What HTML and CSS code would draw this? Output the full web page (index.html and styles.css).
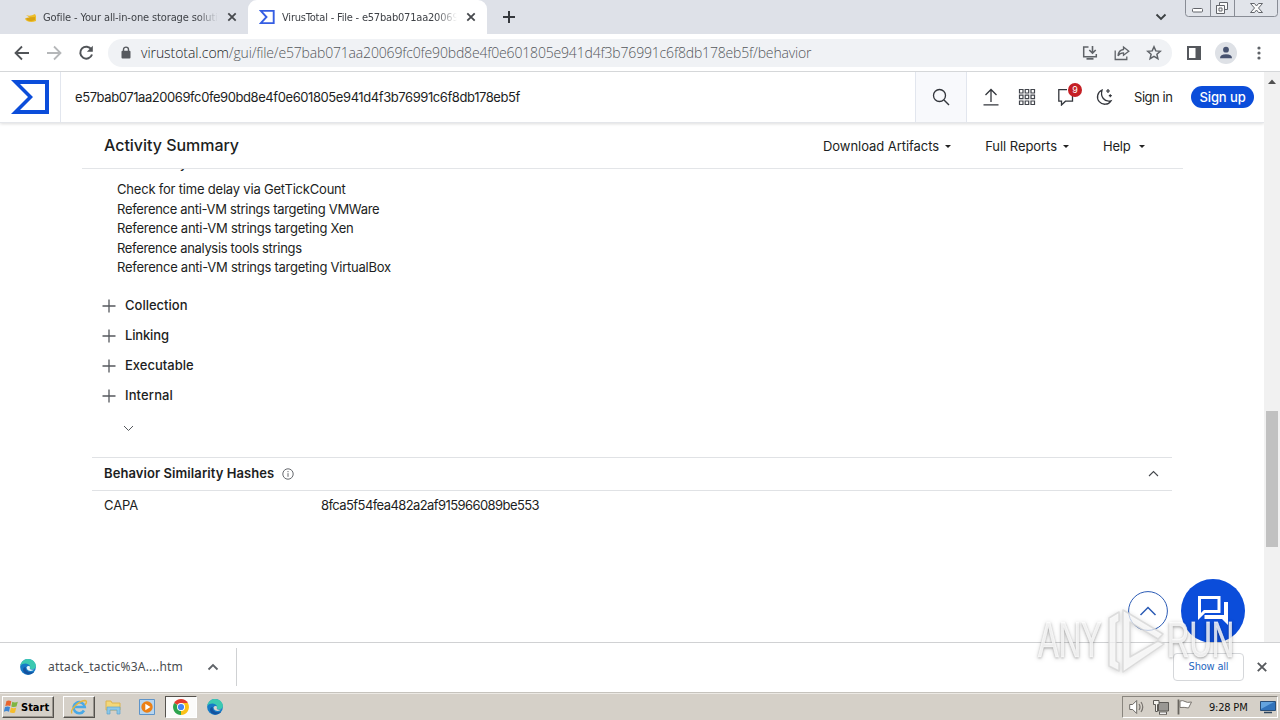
FILE: index.html
```
<!DOCTYPE html>
<html lang="en">
<head>
<meta charset="utf-8">
<title>VirusTotal - File</title>
<link rel="stylesheet" href="styles.css">
</head>
<body>
<div class="screen">
  <div class="tabs">
    <div class="tab tab-idle">
      <svg class="fav" width="16" height="16" viewBox="0 0 16 16"><path d="M4 6q4 2 9-1l1 2v5q-5 2-9 0-2-1-2-3 3 1 5 0z" fill="#edbd29"/><path d="M4 9q4-1 9-1v3q-5 2-8 0z" fill="#d9a312"/></svg>
      <span class="tab-title t1">Gofile - Your all-in-one storage soluti</span>
      <svg width="10" height="10" viewBox="0 0 10 10"><path d="M1.3 1.3l7.4 7.4M8.7 1.3L1.3 8.7" stroke="#46494d" stroke-width="1.8"/></svg>
    </div>
    <div class="tab tab-active">
      <svg class="fav" width="16" height="16" viewBox="0 0 16 16"><path d="M1.8 1.9h12.9v12.2H1.8L7.5 8z" fill="none" stroke="#355ee3" stroke-width="1.9"/></svg>
      <span class="tab-title t2">VirusTotal - File - e57bab071aa20069</span>
      <svg width="10" height="10" viewBox="0 0 10 10"><path d="M1.3 1.3l7.4 7.4M8.7 1.3L1.3 8.7" stroke="#46494d" stroke-width="1.8"/></svg>
    </div>
    <svg class="newtab" width="14" height="14" viewBox="0 0 14 14"><path d="M7 1v12M1 7h12" stroke="#35383d" stroke-width="2"/></svg>
    <svg class="tabsearch" width="12" height="8" viewBox="0 0 12 8"><path d="M1.500 1.500L6 6l4.500-4.500" fill="none" stroke="#3c4043" stroke-width="1.900"/></svg>
    <svg class="winctl" width="97" height="18" viewBox="0 0 97 18"><path d="M1.500-1v14.500q0 3 3 3h86q3 0 3-3V-1M26.500 0v16.500M50.500 0v16.500" fill="#e1e4ea" stroke="#888c95"/><rect x="8.500" y="8.500" width="10" height="3.500" rx="1" fill="#fff" stroke="#62656b"/><path d="M35.500 2.500h8v7h-3v3h-8V5.500h3z" fill="#fafafa" stroke="#62656b"/><path d="M32.500 5.500h8V13.500h-8zM35 8h3v3h-3z" fill="#fafafa" stroke="#62656b"/><path d="M66.500 3.500h4l2 2.500 2-2.500h4L74.500 8l4 4.500h-4l-2-2.500-2 2.500h-4l4-4.500z" fill="#fafafa" stroke="#62656b"/></svg>
  </div>
  <div class="toolbar">
    <svg class="nav" width="16" height="16" viewBox="0 0 16 16"><path d="M15 8H2M8 1.500L1.500 8 8 14.500" fill="none" stroke="#515458" stroke-width="1.800"/></svg>
    <svg class="nav" width="16" height="16" viewBox="0 0 16 16"><path d="M1 8h13M8 1.500L14.500 8 8 14.500" fill="none" stroke="#b5b7b9" stroke-width="1.800"/></svg>
    <svg class="nav" width="16" height="16" viewBox="0 0 16 16"><path d="M13.400 4.500A6 6 0 1 0 14 9.500" fill="none" stroke="#515458" stroke-width="2"/><path d="M14.800.8v6H8.900z" fill="#515458"/></svg>
    <div class="omnibox">
      <svg class="lock" width="10" height="13" viewBox="0 0 10 13"><path d="M2.500 5V3.600a2.500 2.500 0 0 1 5 0V5" fill="none" stroke="#56595e" stroke-width="1.400"/><rect x=".5" y="4.700" width="9" height="7.800" rx="1" fill="#56595e"/></svg>
      <span class="url"><span class="host">virustotal.com</span><span class="path">/gui/file/e57bab071aa20069fc0fe90bd8e4f0e601805e941d4f3b76991c6f8db178eb5f/behavior</span></span>
      <span class="omni-icons">
        <svg width="16" height="16" viewBox="0 0 16 16"><path d="M6.500 2H1.700v9.800h12.600V9" fill="none" stroke="#5f6368" stroke-width="1.500"/><path d="M4.500 13.800h7" stroke="#5f6368" stroke-width="1.800"/><path d="M10.500 1v7M7.300 5l3.200 3.200L13.700 5" fill="none" stroke="#5f6368" stroke-width="1.600"/></svg>
        <svg width="16" height="16" viewBox="0 0 16 16"><path d="M1.200 5.500v9h11.600v-3M9.500 2l5.300 4.200-5.300 4V7.800Q5.800 7.800 4 10.800 4.500 5 9.500 4.500z" fill="none" stroke="#5f6368" stroke-width="1.300"/></svg>
        <svg width="16" height="16" viewBox="0 0 16 16"><path d="M8 1.800l1.800 4.100 4.500.4-3.400 3 1 4.400L8 11.400l-3.900 2.300 1-4.400-3.400-3 4.500-.4z" fill="none" stroke="#5f6368" stroke-width="1.500"/></svg>
      </span>
    </div>
    <svg class="side" width="14" height="14" viewBox="0 0 14 14"><path d="M1 1h12v12H1z" fill="none" stroke="#55585d" stroke-width="2"/><path d="M8.500 1h5v12h-5z" fill="#55585d"/></svg>
    <svg class="profile" width="22" height="22" viewBox="0 0 22 22"><circle cx="11" cy="11" r="11" fill="#dee1e6"/><circle cx="11" cy="7.700" r="2.900" fill="#47526f"/><path d="M5 16.200q0-4 6-4t6 4z" fill="#47526f"/></svg>
    <svg class="dots" width="4" height="14" viewBox="0 0 4 14"><g fill="#5f6368"><circle cx="2" cy="2" r="1.600"/><circle cx="2" cy="7" r="1.600"/><circle cx="2" cy="12" r="1.600"/></g></svg>
  </div>
  <div class="page">
    <div class="main">
      <header class="vt-head">
        <div class="vt-logo"><svg width="39" height="34" viewBox="0 0 39 34"><path d="M0 0h38v34H0l17-17zM9 4l13 13L9 30h25V4z" fill="#0b4dda" fill-rule="evenodd"/></svg></div>
        <span class="hash">e57bab071aa20069fc0fe90bd8e4f0e601805e941d4f3b76991c6f8db178eb5f</span>
        <div class="search"><svg width="18" height="18" viewBox="0 0 18 18"><circle cx="7.500" cy="7.500" r="6" fill="none" stroke="#33363c" stroke-width="1.300"/><path d="M12 12l5 5" stroke="#33363c" stroke-width="1.400"/></svg></div>
        <svg class="upload" width="16" height="18" viewBox="0 0 16 18"><path d="M8 14V1.500M2.500 7L8 1.500 13.500 7M.5 16.800h15" fill="none" stroke="#33363c" stroke-width="1.300"/></svg>
        <svg class="grid" width="18" height="18" viewBox="0 0 18 18"><g fill="none" stroke="#42454c" stroke-width="1.200"><path d="M1.500 1.500h3.500V5H1.500zM7.200 1.500h3.500V5H7.200zM13 1.500h3.500V5H13zM1.500 7.200h3.500v3.500H1.500zM7.200 7.200h3.500v3.500H7.200zM13 7.200h3.500v3.500H13zM1.500 13h3.500v3.500H1.500zM7.200 13h3.500v3.500H7.200zM13 13h3.500v3.500H13z"/></g></svg>
        <div class="bell"><svg width="18" height="18" viewBox="0 0 18 18"><path d="M15.500 8v5.200H8.500L4.500 17v-3.800H1.800V1.700H10" fill="none" stroke="#33363c" stroke-width="1.300"/></svg><span class="badge">9</span></div>
        <svg class="moon" width="18" height="18" viewBox="0 0 18 18"><path d="M7 2.200A7.300 7.300 0 1 0 16 12.800Q11 14 8.300 10.500T7 2.200z" fill="none" stroke="#33363c" stroke-width="1.300"/><path d="M13 1v4M11 3h4M15.300 6.200v3M13.800 7.700h3" stroke="#33363c" stroke-width="1.200"/></svg>
        <span class="signin">Sign in</span>
        <span class="signup">Sign up</span>
      </header>
      <div class="summary">
        <h1><span>Activity Summary</span></h1>
        <div class="menus"><span class="m1">Download Artifacts</span><i class="caret"></i><span class="m2">Full Reports</span><i class="caret"></i><span class="m3">Help</span><i class="caret"></i></div>
      </div>
      <div class="clipped"><span>Discovery</span></div>
      <div class="caps">
        <div><span class="c1">Check for time delay via GetTickCount</span></div>
        <div><span class="c2">Reference anti-VM strings targeting VMWare</span></div>
        <div><span class="c3">Reference anti-VM strings targeting Xen</span></div>
        <div><span class="c4">Reference analysis tools strings</span></div>
        <div><span class="c5">Reference anti-VM strings targeting VirtualBox</span></div>
      </div>
      <div class="groups">
        <div><svg width="14" height="14" viewBox="0 0 14 14"><path d="M7 .5v13M.5 7h13"/></svg><span>Collection</span></div>
        <div><svg width="14" height="14" viewBox="0 0 14 14"><path d="M7 .5v13M.5 7h13"/></svg><span class="g2">Linking</span></div>
        <div><svg width="14" height="14" viewBox="0 0 14 14"><path d="M7 .5v13M.5 7h13"/></svg><span>Executable</span></div>
        <div><svg width="14" height="14" viewBox="0 0 14 14"><path d="M7 .5v13M.5 7h13"/></svg><span class="g4">Internal</span></div>
      </div>
      <svg class="more" width="11" height="7" viewBox="0 0 11 7"><path d="M1 1l4.500 4.500L10 1" fill="none" stroke="#55585d"/></svg>
      <div class="similar">
        <span class="sim-title">Behavior Similarity Hashes</span>
        <svg width="12" height="12" viewBox="0 0 12 12"><circle cx="6" cy="6" r="5.200" fill="none" stroke="#66696e"/><path d="M6 5.200v3.600M6 3v1.200" stroke="#66696e"/></svg>
        <svg class="fold" width="11" height="7" viewBox="0 0 11 7"><path d="M1 6l4.500-4.500L10 6" fill="none" stroke="#44474c" stroke-width="1.100"/></svg>
      </div>
      <div class="capa"><span class="k">CAPA</span><span class="v">8fca5f54fea482a2af915966089be553</span></div>
      <div class="fabs">
        <svg width="40" height="40" viewBox="0 0 40 40"><circle cx="20" cy="20" r="19.400" fill="#fff" stroke="#2b5bb5"/><path d="M12.500 24l7.500-7.500 7.500 7.500" fill="none" stroke="#2b5bb5" stroke-width="1.500"/></svg>
        <svg width="64" height="64" viewBox="0 0 64 64"><circle cx="32" cy="32" r="32" fill="#0b4dda"/><path d="M18.500 18.500h19.500v14H23.500L18.500 37.500z" fill="none" stroke="#fff" stroke-width="3"/><path d="M43 23h4v23l-6-6H23.500v-4H43z" fill="#fff"/></svg>
      </div>
    </div>
    <div class="scroll"><svg width="8" height="5" viewBox="0 0 8 5"><path d="M4 .5L8 5H0z" fill="#505050"/></svg><div class="thumb"></div></div>
  </div>
  <div class="shelf">
    <svg class="edge" width="16" height="16" viewBox="0 0 16 16"><circle cx="8" cy="8" r="7.900" fill="#167bc6"/><path d="M.3 7C1 2.500 4.500.1 8 .1c5 0 8 3.800 7.900 7 0 3-3.500 4-5.700 2.700-1.100-.8.500-1.300-.2-2.800C8.500 4 3 3.500.3 7z" fill="#3bc9b1"/><path d="M5.700 8c-.6 4 3.800 6.500 8.500 4.800-3 4.200-10 3.500-11-1C2.600 9.300 4 8.200 5.700 8z" fill="#14529f"/><path d="M6.500 8.300q1-1.800 3-1.300.9 1.500.2 2.500.7 1.700 4.800 1-3 2.300-6 1-2-1-2-3.200z" fill="#e7f8fb"/></svg>
    <span class="file">attack_tactic%3A....htm</span>
    <svg class="up" width="12" height="8" viewBox="0 0 12 8"><path d="M1.500 6.500L6 2l4.500 4.500" fill="none" stroke="#5f6368" stroke-width="1.800"/></svg>
    <i class="bar"></i>
    <span class="showall"><span>Show all</span></span>
    <svg class="close" width="10" height="10" viewBox="0 0 10 10"><path d="M.8.8l8.400 8.400M9.200.8L.8 9.200" stroke="#56595d" stroke-width="1.900"/></svg>
  </div>
  <div class="taskbar">
    <div class="start"><svg width="16" height="16" viewBox="0 0 16 16"><path d="M2.500 2Q5 .8 7.300 2.300L6.300 7Q4 5.800 1.300 7z" fill="#e9652c"/><path d="M8.300 2.800q2.500 1.200 5.500 0l-1.300 4.700q-2.700 1-5.200-.1z" fill="#7fb541"/><path d="M1 8q2.700-1.100 5 .1l-1 4.700q-2.500-1.500-5.200 0z" fill="#3f86d2"/><path d="M7 8.600q2.500 1.200 5.200.2L11 13.500q-2.700 1.200-5.200-.2z" fill="#f5bd2d"/></svg><span>Start</span></div>
    <div class="tb raised"><svg width="18" height="18" viewBox="0 0 18 18"><path d="M14 12.500A5.600 5.600 0 1 1 14.700 9H5" fill="none" stroke="#4aa9e6" stroke-width="2.600"/><path d="M2 15.500C-1 13 8 3 15 2.500q3 .5 0 4.500" fill="none" stroke="#e6b63c" stroke-width="1.400"/></svg></div>
    <div class="tb"><svg width="18" height="18" viewBox="0 0 18 18"><path d="M2 3h5l1 2h8v7H2z" fill="#f3d779" stroke="#dcb451"/><path d="M3 9h13v7h-3v-4H6v4H3z" fill="#8dc8e8" stroke="#5fa5ce" stroke-width=".7"/></svg></div>
    <div class="tb"><svg width="16" height="16" viewBox="0 0 16 16"><path d="M.5.500h15v15H.500z" fill="#b7d5ef" stroke="#5e94c9"/><circle cx="8" cy="8" r="5.700" fill="#ec8015"/><path d="M6.300 4.800v6.400L11.500 8z" fill="#fff"/></svg></div>
    <div class="tb pressed"><svg width="16" height="16" viewBox="0 0 16 16"><path d="M8 8L1.100 4A8 8 0 0 1 14.900 4z" fill="#e33b2e"/><path d="M8 8h0L1.100 4A8 8 0 0 0 8 16z" fill="#2da44e"/><path d="M8 16A8 8 0 0 0 14.900 4H8v4z" fill="#fbc116"/><circle cx="8" cy="8" r="4" fill="#fff"/><circle cx="8" cy="8" r="3.100" fill="#4285f4"/></svg></div>
    <div class="tb"><svg width="16" height="16" viewBox="0 0 16 16"><circle cx="8" cy="8" r="7.900" fill="#167bc6"/><path d="M.3 7C1 2.500 4.500.1 8 .1c5 0 8 3.800 7.900 7 0 3-3.500 4-5.700 2.700-1.100-.8.500-1.300-.2-2.800C8.500 4 3 3.500.3 7z" fill="#3bc9b1"/><path d="M5.700 8c-.6 4 3.800 6.500 8.500 4.800-3 4.200-10 3.500-11-1C2.600 9.300 4 8.200 5.700 8z" fill="#14529f"/><path d="M6.500 8.300q1-1.800 3-1.300.9 1.500.2 2.500.7 1.700 4.800 1-3 2.300-6 1-2-1-2-3.200z" fill="#d9d5cf"/></svg></div>
    <div class="tray">
      <svg width="16" height="16" viewBox="0 0 16 16"><path d="M.7 5.500h3l4-4v13l-4-4h-3z" fill="#fff" stroke="#6d6a66"/><path d="M10 5q2 3 0 6M12 3q3.500 5 0 10" fill="none" stroke="#77736e" stroke-width="1.200"/></svg>
      <svg width="16" height="16" viewBox="0 0 16 16"><path d="M5.500 3.500h10v8.500h-10z" fill="#999793" stroke="#5d5a56"/><path d="M6 14.200h8" stroke="#5d5a56" stroke-width="3"/><path d="M7 14.200h6" stroke="#f6f6f6" stroke-width="1.500"/><path d="M.5 1.500h5.500v4H4.500v7h-2v-7H.5z" fill="#f4f3ef" stroke="#5d5a56"/></svg>
      <svg width="16" height="16" viewBox="0 0 16 16"><path d="M1.500.5v15" stroke="#69655f" stroke-width="1.800"/><path d="M3 2q3-1 5 .5t6.500.5l-3 6Q7 8 3 8.500z" fill="#fff" stroke="#7a7670"/></svg>
      <span class="clock">9:28 PM</span>
      <svg class="desk" width="16" height="14" viewBox="0 0 16 14"><path d="M.5 1.500h15v9H.5z" fill="#3173bb" stroke="#294e78"/><path d="M1 2h13L1 9z" fill="#63a3de"/><path d="M4 12.500h8" stroke="#2e455e" stroke-width="1.500"/></svg>
    </div>
  </div>
  <div class="mark"><span class="any">ANY</span><svg width="62" height="66" viewBox="0 0 62 66"><path d="M4 11l10-6v9l-3 2v38l3 2v8L4 59zM18 3l40 24-5 5-28-17v35l28-16 6 3-41 28z" fill="#fff" fill-opacity=".7" stroke="#d6d6d6" stroke-opacity=".8" stroke-width="1.500" stroke-linejoin="round"/></svg><span class="run">RUN</span></div>
</div>
</body>
</html>
```
FILE: styles.css
```
* { box-sizing: border-box; }
body { margin: 0; }
svg { display: block; flex: none; }
.screen { position: relative; width: 1280px; height: 720px; overflow: hidden; display: flex; flex-direction: column; background: #fff; font-family: Inter, sans-serif; color: #1c1e22; white-space: nowrap; }

.tabs { height: 34px; background: #dee1e8; display: flex; align-items: flex-start; flex: none; }
.tab { height: 34px; display: flex; align-items: center; font: 11px "DejaVu Sans Condensed", "DejaVu Sans", sans-serif; color: #3f4247; }
.tab-idle { width: 248px; padding-left: 22px; }
.tab-active { width: 239px; background: #fff; border-radius: 9px 9px 0 0; padding-left: 11px; }
.tab-title { overflow: hidden; margin-right: 9px; -webkit-mask-image: linear-gradient(to right, #000 88%, transparent); mask-image: linear-gradient(to right, #000 88%, transparent); }
.t1 { width: 175px; margin-left: 5px; letter-spacing: -.13px; }
.t2 { width: 175px; margin-left: 7px; letter-spacing: -.2px; }
.newtab { margin: 10px 0 0 15px; }
.tabsearch { margin: 13px 17px 0 auto; }
.winctl { margin-right: -1px; }

.toolbar { height: 38px; flex: none; display: flex; align-items: center; padding-left: 14px; border-bottom: 1px solid #d5d7d9; }
.nav { margin-right: 16px; }
.omnibox { margin-left: -2px; width: 1064px; height: 28px; border-radius: 14px; background: #f0f2f5; display: flex; align-items: center; padding: 0 10px 0 13px; }
.url { margin-left: 10px; font: 14px "Open Sans", sans-serif; font-weight: 300; color: #54575b; }
.host { color: #202124; letter-spacing: -.05px; }
.path { letter-spacing: -.17px; }
.omni-icons { display: flex; gap: 16px; margin-left: auto; }
.side { margin-left: 15px; }
.profile { margin-left: 14px; }
.dots { margin-left: 20px; }

.page { height: 570px; flex: none; display: flex; }
.main { width: 1264px; height: 570px; overflow: hidden; display: flex; flex-direction: column; align-items: flex-start; }
.vt-head { width: 1264px; height: 51px; flex: none; display: flex; align-items: center; border-bottom: 1px solid #e4e6ea; box-shadow: 0 1px 3px #0002; }
.vt-logo { width: 61px; height: 50px; border-right: 1px solid #e2e6ee; padding: 8px 0 0 11px; }
.hash { width: 840px; padding-left: 14px; font-size: 13px; letter-spacing: -.42px; }
.search { width: 52px; height: 50px; border: 1px solid #e2e6ee; border-width: 0 1px; background: #f8f9fc; display: grid; place-items: center; margin-left: 14px; }
.upload { margin-left: 16px; }
.grid { margin-left: 19px; }
.bell { position: relative; margin-left: 21px; }
.badge { position: absolute; left: 11px; top: -5px; width: 14px; height: 14px; border-radius: 7px; background: #c51f24; color: #fff; font-size: 9px; line-height: 14px; text-align: center; }
.moon { margin-left: 20px; }
.signin { margin-left: 21px; width: 57px; font-size: 13px; letter-spacing: -.45px; }
.signup { width: 63px; height: 22px; border-radius: 11px; background: #0b4dda; color: #fff; font-size: 13px; line-height: 22px; text-align: center; font-weight: 500; letter-spacing: -.1px; }

.summary { margin-left: 82px; width: 1101px; height: 46px; flex: none; border-bottom: 1px solid #e3e5e8; display: flex; align-items: center; padding-left: 22px; }
h1 { margin: 0 0 1px; width: 719px; font-size: 16px; font-weight: 500; letter-spacing: -.03px; }
.menus { display: flex; align-items: center; font-size: 13px; }
.m1 { letter-spacing: -.05px; }
.m2 { letter-spacing: -.05px; }
.m3 { letter-spacing: -.2px; }
.caret { border: 3px solid transparent; border-top-color: #222; border-bottom: 0; margin: 1px 34px 0 6px; }
.m3 + .caret { margin-left: 8px; }
.clipped { height: 11px; overflow: hidden; padding-left: 125px; font-size: 13px; font-weight: 500; line-height: 20px; flex: none; }
.clipped span { display: block; margin-top: -16px; }
.caps { margin-left: 117px; font-size: 13px; line-height: 19.500px; letter-spacing: -.25px; }
.c1 { letter-spacing: -.2px; }
.c2 { letter-spacing: -.3px; }
.c4 { letter-spacing: -.32px; }
.groups { margin: 13px 0 0 102px; }
.groups div { height: 30px; display: flex; align-items: center; gap: 9px; font-size: 13px; font-weight: 500; }
.groups span { margin-bottom: 1px; }
.g2 { letter-spacing: -.15px; }
.g4 { letter-spacing: .13px; }
.groups path { stroke: #55585d; stroke-width: 1.300; }
.more { margin: 14px 0 25px 123px; }
.similar { margin-left: 92px; width: 1080px; height: 34px; flex: none; border: 1px solid #e0e2e5; border-width: 1px 0; display: flex; align-items: center; padding: 0 13px 0 12px; gap: 8px; font-size: 13px; font-weight: 600; letter-spacing: .08px; }
.sim-title { margin-bottom: 1px; }
.fold { margin-left: auto; }
.capa { display: flex; margin: 5px 0 0 104px; font-size: 13px; line-height: 19px; }
.capa .k { width: 217px; letter-spacing: -.1px; }
.capa .v { letter-spacing: -.58px; }
.fabs { margin: 64px 0 0 1128px; display: flex; align-items: center; gap: 13px; }
.scroll { width: 16px; background: #f1f1f1; padding: 7px 2px 0; display: flex; flex-direction: column; align-items: center; }
.thumb { margin-top: 327px; width: 12px; height: 136px; background: #c1c1c1; }

.shelf { height: 51px; flex: none; border-top: 1px solid #d0d1d3; border-bottom: 1px solid #c6c3bd; background: #fff; display: flex; align-items: center; padding: 0 0 2px 20px; }
.file { width: 148px; margin-left: 12px; font: 12px "Noto Sans", sans-serif; color: #494c50; letter-spacing: .22px; }
.up { margin-left: 11px; }
.bar { margin-left: 17px; width: 1px; height: 38px; background: #cfd1d3; }
.showall { margin-left: 936px; width: 71px; height: 28px; border: 1px solid #d5d7da; border-radius: 4px; font: 11px/26px "DejaVu Sans Condensed", sans-serif; text-align: center; color: #2768c0; letter-spacing: -.2px; }
.close { margin-left: 13px; }

.taskbar { height: 27px; flex: none; background: #d5d0c8; display: flex; padding-top: 2px; border-top: 1px solid #ece9e4; }
.start, .raised { border: 1px solid; border-color: #fff #55524d #55524d #fff; box-shadow: inset -1px -1px #99958e; }
.start { margin-left: 2px; width: 52px; height: 22px; display: flex; align-items: center; gap: 1px; padding-left: 1px; font: bold 11px "DejaVu Sans Condensed", sans-serif; color: #000; letter-spacing: 0; }
.tb { width: 32px; height: 22px; display: grid; place-items: center; margin-right: 2px; }
.start + .tb { margin-left: 9px; }
.pressed { background: #fbfbfa; border: 1px solid; border-color: #55524d #fff #fff #55524d; }
.tray { margin-left: auto; margin-right: 2px; width: 156px; height: 22px; border: 1px solid; border-color: #89857e #fff #fff #89857e; display: flex; align-items: center; gap: 8px; padding-left: 6px; }
.clock { width: 42px; margin-left: 8px; font: 11px "DejaVu Sans Condensed", sans-serif; color: #111; letter-spacing: -.2px; }
.desk { margin-left: 1px; }
.mark { position: absolute; left: 1038px; top: 607px; height: 66px; display: flex; align-items: center; font: 50px/66px "Liberation Sans", sans-serif; color: #ffffffd0; -webkit-text-stroke: 1px #ffffffa0; text-shadow: 0 1px 3px #00000058; filter: drop-shadow(0 1px 2px #00000030); }
.any, .run { display: block; width: 67px; transform-origin: 0 50%; transform: scaleX(.62); }
```
